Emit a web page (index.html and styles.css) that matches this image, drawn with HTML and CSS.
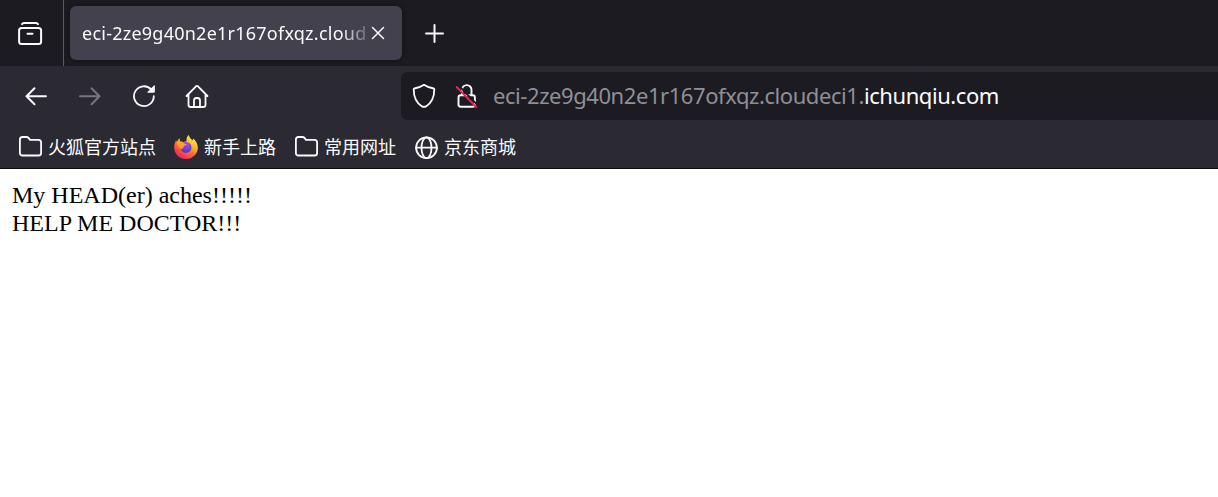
FILE: index.html
```html
<!DOCTYPE html>
<html lang="zh-CN">
<head>
<meta charset="utf-8">
<title>eci-2ze9g40n2e1r167ofxqz.cloudeci1.ichunqiu.com</title>
<link rel="stylesheet" href="styles.css">
</head>
<body>
<header class="tabs">
  <div class="view">
    <svg width="26" height="26" viewBox="0 0 26 26" class="icon"><rect x="2.1" y="8" width="22" height="16" rx="2.500"/><path d="M5 4.200Q5.500 3 7 3h12q1.500 0 2 1.200M10.500 13.800h5"/></svg>
  </div>
  <div class="tab">
    <span class="tab-title">eci-2ze9g40n2e1r167ofxqz.cloud</span>
    <svg width="14" height="14" viewBox="0 0 14 14" class="icon close"><path d="M1.500 1.500l11 11m0-11l-11 11"/></svg>
  </div>
  <svg width="20" height="20" viewBox="0 0 20 20" class="icon new-tab"><path d="M10.500 2v17M2 10.500h17"/></svg>
</header>
<nav class="toolbar">
  <div class="buttons">
    <svg width="24" height="24" viewBox="0 0 24 24" class="icon"><path d="M22 12.300H2.500M10.500 4.300l-8 8 8 8"/></svg>
    <svg width="24" height="24" viewBox="0 0 24 24" class="icon disabled"><path d="M2 12.300h19.500M13.500 4.300l8 8-8 8"/></svg>
    <svg width="24" height="24" viewBox="0 0 24 24" class="icon reload"><path d="M21.800 12.200A9.900 9.900 0 1 1 19.300 5.600"/><path class="solid" d="M22.300 2v6.200h-6.200z"/></svg>
    <svg width="24" height="24" viewBox="0 0 24 24" class="icon home"><path d="M1.500 12L11 2.300q1-.8 2 0L22.500 12M3.500 10.500v10.200q0 2.300 2.300 2.300h12.400q2.300 0 2.300-2.300V10.500M9 23v-6.500q0-2.500 2.500-2.500h1q2.500 0 2.500 2.500V23"/></svg>
  </div>
  <div class="address">
    <svg width="24" height="26" viewBox="0 0 24 26" class="icon shield"><path d="M12 1.800Q16.500 5 21.800 5.500q.5.200.5.800c0 8.500-2.300 13.500-8.300 17.100q-2 1.100-4 0C4 19.800 1.700 14.800 1.700 6.300q0-.6.5-.8Q7.500 5 12 1.800z"/></svg>
    <svg width="24" height="26" viewBox="0 0 24 26" class="icon lock"><path d="M16.500 12V6.800a4.700 4.700 0 0 0-9.400 0V12M5.700 12.200h12q2.200 0 2.200 2.200v7.200q0 2.200-2.200 2.200h-12q-2.200 0-2.200-2.200v-7.200q0-2.200 2.200-2.200z"/><path class="gap" d="M3.800 2.700l19 19.700"/><path class="slash" d="M1.700 4l19.500 20"/></svg>
    <span class="url">eci-2ze9g40n2e1r167ofxqz.cloudeci1.<b>ichunqiu.com</b></span>
  </div>
</nav>
<div class="bookmarks">
  <a><svg width="24" height="24" viewBox="0 0 24 24" class="icon folder"><path d="M4.500 2h4q1.200 0 2 .9l1.500 2h8.500q2.600 0 2.600 2.600v10.400q0 2.600-2.600 2.600H4.500q-2.600 0-2.600-2.600V4.600Q1.900 2 4.500 2z"/></svg><span>火狐官方站点</span></a>
  <a><svg width="24" height="24" viewBox="0 0 24 24">
    <defs>
      <linearGradient id="flame" x1=".85" y1=".05" x2=".25" y2="1"><stop offset="0" stop-color="#fff34f"/><stop offset=".35" stop-color="#ffb52b"/><stop offset=".62" stop-color="#ff6634"/><stop offset="1" stop-color="#f51766"/></linearGradient>
      <radialGradient id="orb" cx=".6" cy=".25" r=".8"><stop offset="0" stop-color="#a846ee"/><stop offset="1" stop-color="#493cbd"/></radialGradient>
    </defs>
    <path fill="url(#flame)" d="M14.800 0c.3 2.400 2.200 3.600 3.800 5.400l.5-2c2.700 2.100 4.700 5.600 4.700 9.100C23.800 19.100 18.600 24 12 24S.2 19 .2 12.400c0-3.500 1.100-5.700 2-7.100l.7 1.900L5.300 3.300l.6 3.200c1.700-.3 2.700.1 3.500.8 1-.6 1.700-1 3.100-1.100-.3-2.600.6-5 2.300-6.200z"/>
    <circle cx="12" cy="12.400" r="5.500" fill="url(#orb)"/>
    <path fill="#ffa22b" d="M2.700 7.200l2.600-3.900.6 3.200c2-.2 3.300.6 4.300 2.100l2.400.4c-.3 1.500-2.700 1.700-3.200 2.700.3 1.300-.8 2.200-2.500 2.200-1.500-1-3.800-3.300-4.200-6.700z"/>
  </svg><span>新手上路</span></a>
  <a><svg width="24" height="24" viewBox="0 0 24 24" class="icon folder"><path d="M4.500 2h4q1.200 0 2 .9l1.500 2h8.500q2.600 0 2.600 2.600v10.400q0 2.600-2.600 2.600H4.500q-2.600 0-2.600-2.600V4.600Q1.900 2 4.500 2z"/></svg><span>常用网址</span></a>
  <a><svg width="24" height="24" viewBox="0 0 24 24" class="icon folder"><circle cx="12.500" cy="12.700" r="10.400"/><ellipse cx="12.500" cy="12.700" rx="5" ry="10.400"/><path d="M2 12.700h21"/></svg><span>京东商城</span></a>
</div>
<main class="page">My HEAD(er) aches!!!!!<br>HELP ME DOCTOR!!!</main>
</body>
</html>
```
FILE: styles.css
```css
* { box-sizing: border-box; }
body {
  margin: 0;
  height: 497px;
  overflow: hidden;
  background: #fff;
  color: #fbfbfe;
  font-family: "Noto Sans", "Noto Sans CJK SC", sans-serif;
}
svg { flex: none; display: block; }
.icon { fill: none; stroke: #fbfbfe; stroke-width: 2; stroke-linecap: round; stroke-linejoin: round; }
.tabs { display: flex; align-items: center; height: 66px; background: #1c1b22; }
.view { width: 64px; height: 66px; padding: 20px 0 0 17px; border-right: 1px solid #5b5a62; }
.tab {
  display: flex;
  align-items: center;
  width: 332px;
  height: 54px;
  margin-left: 6px;
  padding-left: 12px;
  border-radius: 6px;
  background: #42414d;
  box-shadow: 0 0 5px rgba(0, 0, 0, .5);
}
.tab-title {
  width: 285px;
  white-space: nowrap;
  font-size: 18px;
  line-height: 30px;
  letter-spacing: .24px;
  -webkit-mask-image: linear-gradient(to right, #000 258px, transparent 292px);
  mask-image: linear-gradient(to right, #000 258px, transparent 292px);
}
.close { margin-left: 4px; stroke-width: 1.500; }
.new-tab { margin-left: 22px; }
.toolbar { display: flex; align-items: center; height: 60px; background: #2b2a33; }
.buttons { display: flex; gap: 30px; width: 401px; padding-left: 24px; }
.disabled { stroke: #77767d; }
.reload { stroke-width: 1.800; }
.solid { fill: #fbfbfe; stroke-width: 1; }
.home { margin-left: -1px; stroke-width: 1.800; }
.address {
  display: flex;
  align-items: center;
  flex: 1;
  height: 48px;
  padding-left: 11px;
  border-radius: 6px 0 0 6px;
  background: #1c1b22;
}
.shield { stroke-width: 1.800; }
.lock { margin-left: 19px; stroke-width: 1.900; }
.gap { stroke: #1c1b22; }
.slash { stroke: #e22850; }
.url {
  margin-left: 14px;
  padding-bottom: 2px;
  font-size: 22px;
  line-height: 34px;
  letter-spacing: -.43px;
  white-space: nowrap;
  color: #8f8f94;
}
.url b { font-weight: 400; color: #fbfbfe; }
.bookmarks {
  display: flex;
  gap: 18px;
  height: 43px;
  padding: 0 18px;
  border-bottom: 1px solid #0c0c0d;
  background: #2b2a33;
  font-family: "Noto Sans CJK SC", sans-serif;
  font-size: 18px;
}
.bookmarks a { display: flex; align-items: center; gap: 6px; white-space: nowrap; }
.bookmarks span { padding-bottom: 2px; }
.folder { stroke-width: 1.800; }
.page {
  padding: 12px;
  color: #000;
  font: 24px/28px "Liberation Serif", serif;
}
```
